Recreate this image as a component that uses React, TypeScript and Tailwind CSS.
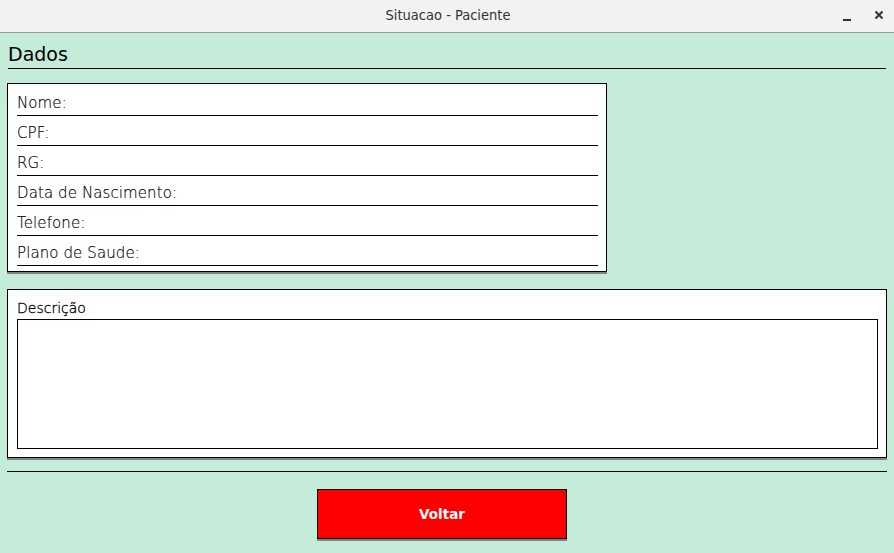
import React from "react";

const fields = ["Nome:", "CPF:", "RG:", "Data de Nascimento:", "Telefone:", "Plano de Saude:"];

export default function App() {
  return (
    <div className="w-[894px] h-[553px] bg-[#c5ebd9] overflow-hidden" style={{ fontFamily: '"DejaVu Sans", sans-serif' }}>
      <div className="relative h-[33px] bg-[#f2f2f2] border-b border-[#9a9a9a] flex items-center justify-center">
        <span className="text-[14.5px] text-[#2e3436] pl-[2px]" style={{ fontFamily: '"DejaVu Sans Condensed", "DejaVu Sans", sans-serif', fontStretch: "condensed" }}>Situacao - Paciente</span>
        <div className="absolute right-[10px] top-[7px] flex items-center gap-[22px] text-[#2e3436]">
          <svg width="10" height="16" viewBox="0 0 10 16"><rect x="1" y="12" width="8" height="2" fill="#2e3436" /></svg>
          <svg width="10" height="16" viewBox="0 0 10 16"><path d="M1.5 4.5 L8.5 11.5 M8.5 4.5 L1.5 11.5" stroke="#2e3436" strokeWidth="2" /></svg>
        </div>
      </div>
      <div className="px-[7px]">
        <div className="mx-[1px] mt-[10px] h-[26px] border-b border-black text-[19px] leading-[23px] text-black">Dados</div>
        <div className="mt-[14px] w-[600px] bg-white border border-black shadow-[0_2px_0_#808080] pt-[2px] pb-[5px] pl-[9px] pr-[8px]">
          {fields.map((f) => (
            <div key={f} className="h-[30px] border-b border-black flex items-end pb-[3px] text-[15px] leading-[18px] text-black font-extralight tracking-[0.1px] [-webkit-text-stroke:0.15px_black]">
              {f}
            </div>
          ))}
        </div>
        <div className="mt-[17px] w-[880px] h-[169px] bg-white border border-black shadow-[0_2px_0_#808080] px-[9px] pt-[10px]">
          <div className="text-[14px] leading-[17px] h-[19px] text-black font-extralight [-webkit-text-stroke:0.3px_black]">Descrição</div>
          <div className="w-[861px] h-[130px] border border-black"></div>
        </div>
        <div className="mt-[13px] h-px bg-black w-[880px]"></div>
        <button className="mt-[17px] ml-[310px] w-[250px] h-[50px] bg-[#ff0000] border border-black shadow-[0_2px_0_#808080] text-white font-bold text-[13.5px] flex items-center justify-center">
          Voltar
        </button>
      </div>
    </div>
  );
}
